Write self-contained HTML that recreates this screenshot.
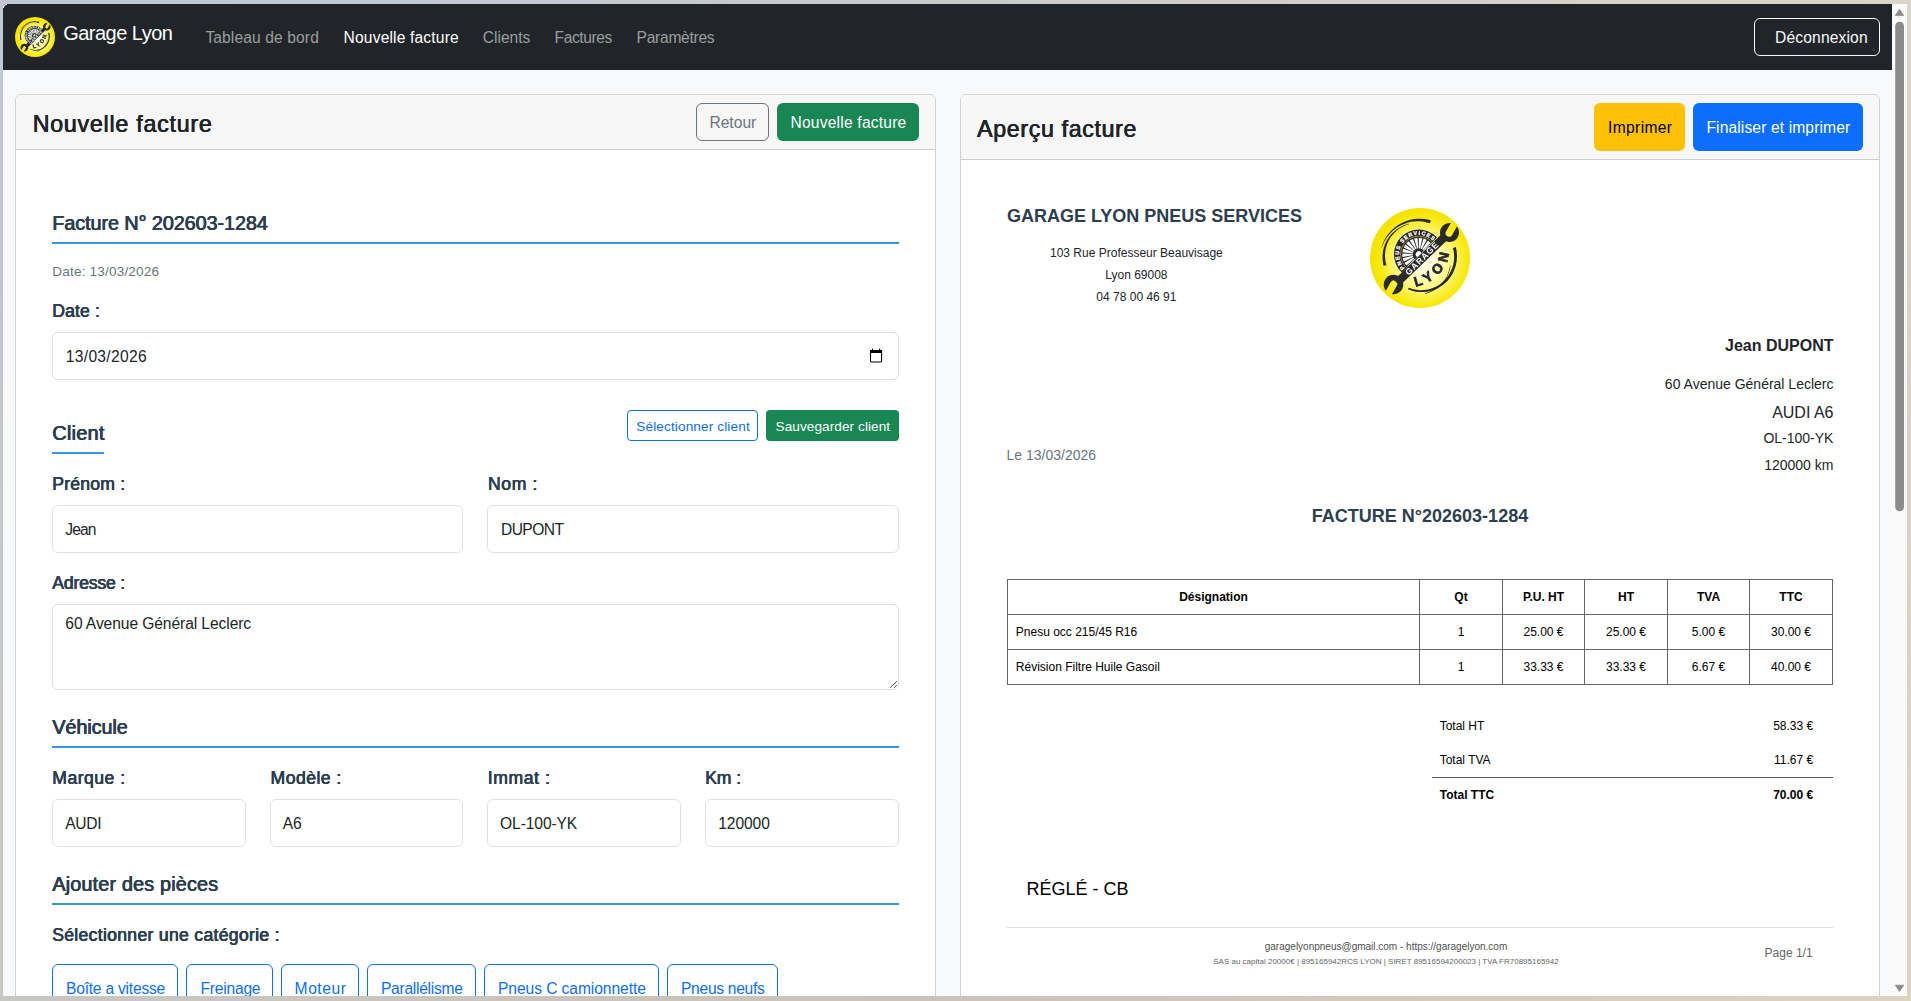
<!DOCTYPE html>
<html lang="fr"><head><meta charset="utf-8"><title>Garage Lyon - Nouvelle facture</title>
<style>
html,body{margin:0;padding:0;}
body{width:1911px;height:1001px;overflow:hidden;position:relative;font-family:"Liberation Sans",Arial,sans-serif;color:#212529;
background:#c9c5bc;}
.frame{position:absolute;left:0;top:0;width:1911px;height:1001px;
background:linear-gradient(90deg,#c0c7d3 0%,#c4c9d0 35%,#cfcec9 65%,#d9d5c9 100%);}
.frame2{position:absolute;left:0;top:0;width:1911px;height:1001px;
background:linear-gradient(90deg,#c7c7c3 0%,#cac3b7 50%,#ddd3c0 100%);
-webkit-mask-image:linear-gradient(180deg,transparent 25%,#000 78%);mask-image:linear-gradient(180deg,transparent 25%,#000 78%);}
.vp{position:absolute;left:3px;top:4px;width:1904px;height:992px;overflow:hidden;background:#f8f9fa;}
.b{position:absolute;box-sizing:border-box;}
.t{position:absolute;white-space:nowrap;line-height:1;margin:0;padding:0;font-weight:400;}
a.t{text-decoration:none;}
.card{border:1px solid #d2d2d2;border-radius:6px;background:#fff;}
.chead{background:#f7f7f7;border-bottom:1px solid #cdcdcd;border-radius:5px 5px 0 0;}
.btn{border-radius:6px;border:1px solid transparent;}
.fc{border:1px solid #dee2e6;border-radius:6px;background:#fff;}
.ul{background:#3498db;}
nav,main,section,header,form,ul,li,table,thead,tbody,tr,th,td,footer,h4,h5,label,button{all:unset;}
</style></head><body>
<div class="frame"></div><div class="frame2"></div>
<div class="vp">
<nav>
<div class="b" style="left:0px;top:0px;width:1889px;height:66px;background:#212529;"></div>
<div class="b" style="left:12px;top:13px;width:40px;height:40px;filter:blur(0.3px);"><svg viewBox="0 0 100 100" width="100%" height="100%" style="display:block"><defs><radialGradient id="lg1" cx="53%" cy="53%" r="50%"><stop offset="0" stop-color="#fffff4"/><stop offset="0.32" stop-color="#fffcc6"/><stop offset="0.62" stop-color="#fdf46c"/><stop offset="0.84" stop-color="#f9eb1c"/><stop offset="1" stop-color="#f4e400"/></radialGradient><clipPath id="lc1"><rect x="-45" y="-45" width="90" height="42.5"/></clipPath><path id="pa1" d="M-17.90 -3.06A19.6 19.6 0 1 1 21.06 -0.33"/><path id="pb1" d="M40.00 78.60A39.6 39.6 0 0 0 79.50 36.24"/></defs><circle cx="50" cy="50" r="50" fill="url(#lg1)"/><path d="M11.55 38.97L12.70 35.68L14.13 32.51L15.83 29.47L17.79 26.60L19.99 23.91L22.41 21.43L25.04 19.17L27.84 17.15L30.81 15.39L33.92 13.89L37.15 12.67L40.46 11.74L43.84 11.10L47.26 10.76L50.69 10.71L54.10 10.97L57.48 11.52L60.79 12.37L59.94 15.35L56.92 14.42L53.81 13.76L50.64 13.36L47.43 13.25L44.21 13.42L40.99 13.87L37.81 14.61L34.70 15.63L31.66 16.92L28.74 18.48L25.95 20.30L23.31 22.37L20.86 24.67L18.60 27.19L16.56 29.91L14.76 32.81L13.21 35.88L11.93 39.08Z" fill="#2a2a2a"/><path d="M13.56 57.74L12.97 54.77L12.62 51.74L12.53 48.69L12.70 45.64L13.14 42.61L13.84 39.63L14.81 36.73L16.03 33.92L17.50 31.24L19.20 28.70L21.12 26.34L23.24 24.16L25.54 22.19L27.99 20.44L30.57 18.91L33.26 17.62L36.04 16.57L38.88 15.76L39.00 16.14L36.25 17.07L33.58 18.22L31.01 19.60L28.56 21.20L26.26 23.01L24.13 25.02L22.19 27.21L20.45 29.56L18.93 32.06L17.65 34.69L16.61 37.41L15.83 40.20L15.30 43.05L15.03 45.91L15.01 48.78L15.24 51.62L15.71 54.41L16.40 57.14Z" fill="#2a2a2a"/><path d="M85.86 39.04L86.72 43.60L87.01 48.20L86.72 52.78L85.87 57.26L84.48 61.58L82.58 65.66L80.20 69.45L77.39 72.89L74.19 75.94L70.66 78.56L66.86 80.70L62.85 82.34L58.69 83.47L54.45 84.06L50.20 84.12L46.00 83.66L41.92 82.69L38.01 81.23L38.62 79.64L42.34 80.97L46.22 81.83L50.19 82.21L54.19 82.09L58.17 81.47L62.06 80.36L65.80 78.77L69.33 76.71L72.59 74.23L75.53 71.34L78.11 68.10L80.27 64.55L81.98 60.74L83.22 56.72L83.94 52.57L84.15 48.34L83.84 44.10L82.99 39.91Z" fill="#2a2a2a"/><path d="M80.52 57.61L80.21 59.69L79.76 61.76L79.17 63.81L78.44 65.84L77.56 67.82L76.55 69.77L75.40 71.65L74.11 73.47L72.70 75.21L71.16 76.87L69.50 78.43L67.72 79.89L65.84 81.24L63.86 82.47L61.78 83.57L59.61 84.54L57.37 85.36L55.07 86.05L54.95 85.25L57.21 84.60L59.41 83.80L61.53 82.86L63.57 81.79L65.52 80.60L67.37 79.29L69.11 77.87L70.75 76.34L72.27 74.73L73.66 73.03L74.93 71.25L76.07 69.41L77.07 67.51L77.94 65.56L78.67 63.57L79.27 61.56L79.72 59.53L80.03 57.49Z" fill="#2a2a2a"/><g transform="translate(50,50) rotate(-45)"><g clip-path="url(#lc1)"><circle cx="1.7" cy="-3.4" r="24.8" fill="#2a2a2a"/><circle cx="1.7" cy="-3.4" r="18.2" fill="none" stroke="#e6dc5a" stroke-width="0.55"/><circle cx="1.7" cy="-3.4" r="11.3" fill="none" stroke="#fff" stroke-width="10.4" stroke-dasharray="2.35 0.88" transform="rotate(2 1.7 -3.4)"/><circle cx="1.7" cy="-3.4" r="3.1" fill="#fff"/></g><path d="M-34 -2.8L34 -1.6L34 6.6L-34 5.4Z" fill="#2a2a2a"/><path d="M48.34 3.89A9.5 9.5 0 1 1 46.52 -2.87L37.22 -0.37A3.5 3.5 0 0 0 39.03 6.39Z" fill="#2a2a2a"/><path d="M-47.25 -1.01A9.8 9.8 0 1 1 -45.44 5.75L-35.82 3.17A3.5 3.5 0 0 0 -37.63 -3.59Z" fill="#2a2a2a"/><text x="1.4" y="4.7" text-anchor="middle" font-family="Liberation Sans,Arial,sans-serif" font-weight="700" font-size="8.6" letter-spacing="1.0" fill="#fff">GARAGE</text><text font-family="Liberation Sans,Arial,sans-serif" font-weight="700" font-size="5.4" letter-spacing="1.05" fill="#fff" stroke="#fff" stroke-width="0.28"><textPath href="#pa1" startOffset="0.6">PNEUS SERVICES</textPath></text></g><text font-family="Liberation Sans,Arial,sans-serif" font-weight="700" font-size="13.6" letter-spacing="4.6" fill="#2a2a2a" stroke="#2a2a2a" stroke-width="0.7"><textPath href="#pb1" startOffset="5.4">LYON</textPath></text></svg></div>
<a class="t" style="font-size:20px;top:19px;letter-spacing:-0.520px;color:#fff;left:60.20px;">Garage Lyon</a>
<a class="t" style="font-size:15.6px;top:26px;letter-spacing:0.112px;color:#9b9d9f;left:202.40px;">Tableau de bord</a>
<a class="t" style="font-size:15.6px;top:26px;letter-spacing:0.159px;color:#fff;left:340.60px;">Nouvelle facture</a>
<a class="t" style="font-size:15.6px;top:26px;letter-spacing:-0.026px;color:#9b9d9f;left:479.80px;">Clients</a>
<a class="t" style="font-size:15.6px;top:26px;letter-spacing:-0.412px;color:#9b9d9f;left:551.60px;">Factures</a>
<a class="t" style="font-size:15.6px;top:26px;letter-spacing:-0.284px;color:#9b9d9f;left:633.60px;">Paramètres</a>
<div class="b btn" style="left:1751px;top:14px;width:126px;height:38px;border-color:#f8f9fa;"></div>
<button class="t" style="font-size:15.6px;top:26px;letter-spacing:0.160px;color:#f8f9fa;left:1772.00px;">Déconnexion</button>
<div class="b" style="left:0;top:0;width:4px;height:4px;background:#c2c9d4"></div><div class="b" style="left:0;top:0;width:4px;height:4px;background:#212529;border-top-left-radius:3px;box-shadow:inset 1px 1px 0 #ececff"></div>
</nav>
<main><section>
<div class="b card" style="left:12px;top:90px;width:921px;height:1006px;"></div>
<div class="b chead" style="left:13px;top:91px;width:919px;height:55px;"></div>
<h4 class="t" style="font-size:23.2px;top:109px;-webkit-text-stroke:0.15px #212529;text-shadow:0.3px 0 0 #212529,-0.3px 0 0 #212529;letter-spacing:0.770px;color:#212529;left:29.70px;">Nouvelle facture</h4>
<div class="b btn" style="left:693px;top:99px;width:73px;height:38px;border-color:#6c757d;"></div>
<button class="t" style="font-size:15.6px;top:111px;letter-spacing:0.020px;color:#6c757d;left:706.40px;">Retour</button>
<div class="b btn" style="left:774px;top:99px;width:142px;height:38px;background:#198754;"></div>
<button class="t" style="font-size:15.6px;top:111px;letter-spacing:0.206px;color:#fff;left:787.50px;">Nouvelle facture</button>
<h5 class="t" style="font-size:19.8px;top:210px;-webkit-text-stroke:0.2px #2c3e50;text-shadow:0.33px 0 0 #2c3e50,-0.33px 0 0 #2c3e50;letter-spacing:-0.061px;color:#2c3e50;left:49.30px;">Facture N° 202603-1284</h5>
<div class="b ul" style="left:49px;top:238px;width:847px;height:2px;"></div>
<small class="t" style="font-size:13.6px;top:261px;letter-spacing:0.168px;color:#6c757d;left:49.30px;">Date: 13/03/2026</small>
<label class="t" style="font-size:17.6px;top:299px;-webkit-text-stroke:0.2px #2c3e50;text-shadow:0.28px 0 0 #2c3e50,-0.28px 0 0 #2c3e50;letter-spacing:0.114px;color:#2c3e50;left:49.30px;">Date :</label>
<div class="b fc" style="left:49px;top:328px;width:847px;height:48px;"></div>
<span class="t" style="font-size:15.6px;top:345px;letter-spacing:0.302px;color:#212529;left:62.80px;">13/03/2026</span>
<svg class="b" style="left:865px;top:343px;width:16px;height:17px" viewBox="0 0 16 17"><rect x="2.5" y="3.5" width="11.1" height="11.4" rx="1.1" fill="none" stroke="#000" stroke-width="1.05"/><rect x="2" y="3" width="12.1" height="2.9" rx="0.6" fill="#000"/><rect x="3.9" y="1.6" width="1.1" height="1.8" fill="#000"/><rect x="11.1" y="1.6" width="1.1" height="1.8" fill="#000"/></svg>
<h5 class="t" style="font-size:19.8px;top:420px;-webkit-text-stroke:0.2px #2c3e50;text-shadow:0.33px 0 0 #2c3e50,-0.33px 0 0 #2c3e50;letter-spacing:0.309px;color:#2c3e50;left:49.30px;">Client</h5>
<div class="b ul" style="left:49px;top:448px;width:52px;height:2px;"></div>
<div class="b btn" style="left:624px;top:406px;width:131px;height:31px;border-color:#0d6efd;border-radius:4px;"></div>
<button class="t" style="font-size:13.6px;top:416px;letter-spacing:0.127px;color:#0d6efd;left:633.30px;">Sélectionner client</button>
<div class="b btn" style="left:763px;top:406px;width:133px;height:31px;background:#198754;border-radius:4px;"></div>
<button class="t" style="font-size:13.6px;top:416px;letter-spacing:0.075px;color:#fff;left:772.50px;">Sauvegarder client</button>
<label class="t" style="font-size:17.6px;top:472px;-webkit-text-stroke:0.2px #2c3e50;text-shadow:0.28px 0 0 #2c3e50,-0.28px 0 0 #2c3e50;letter-spacing:0.199px;color:#2c3e50;left:49.30px;">Prénom :</label>
<div class="b fc" style="left:49px;top:501px;width:411px;height:48px;"></div>
<span class="t" style="font-size:15.6px;top:518px;letter-spacing:-0.917px;color:#212529;left:62.30px;">Jean</span>
<label class="t" style="font-size:17.6px;top:472px;-webkit-text-stroke:0.2px #2c3e50;text-shadow:0.28px 0 0 #2c3e50,-0.28px 0 0 #2c3e50;letter-spacing:0.639px;color:#2c3e50;left:485.00px;">Nom :</label>
<div class="b fc" style="left:484px;top:501px;width:412px;height:48px;"></div>
<span class="t" style="font-size:15.6px;top:518px;letter-spacing:-0.526px;color:#212529;left:497.90px;">DUPONT</span>
<label class="t" style="font-size:17.6px;top:571px;-webkit-text-stroke:0.2px #2c3e50;text-shadow:0.28px 0 0 #2c3e50,-0.28px 0 0 #2c3e50;letter-spacing:-0.175px;color:#2c3e50;left:49.30px;">Adresse :</label>
<div class="b fc" style="left:49px;top:600px;width:847px;height:86px;"></div>
<span class="t" style="font-size:15.6px;top:612px;letter-spacing:-0.083px;color:#212529;left:62.30px;">60 Avenue Général Leclerc</span>
<svg class="b" style="left:883px;top:673px;width:11px;height:11px" viewBox="0 0 11 11"><path d="M4.2 10.8L10.8 4.2M8.2 10.8L10.8 8.2" stroke="#5a5a5a" stroke-width="1" fill="none"/></svg>
<h5 class="t" style="font-size:19.8px;top:714px;-webkit-text-stroke:0.2px #2c3e50;text-shadow:0.33px 0 0 #2c3e50,-0.33px 0 0 #2c3e50;letter-spacing:-0.057px;color:#2c3e50;left:49.30px;">Véhicule</h5>
<div class="b ul" style="left:49px;top:742px;width:847px;height:2px;"></div>
<label class="t" style="font-size:17.6px;top:766px;-webkit-text-stroke:0.2px #2c3e50;text-shadow:0.28px 0 0 #2c3e50,-0.28px 0 0 #2c3e50;letter-spacing:0.475px;color:#2c3e50;left:49.30px;">Marque :</label>
<label class="t" style="font-size:17.6px;top:766px;-webkit-text-stroke:0.2px #2c3e50;text-shadow:0.28px 0 0 #2c3e50,-0.28px 0 0 #2c3e50;letter-spacing:0.452px;color:#2c3e50;left:267.60px;">Modèle :</label>
<label class="t" style="font-size:17.6px;top:766px;-webkit-text-stroke:0.2px #2c3e50;text-shadow:0.28px 0 0 #2c3e50,-0.28px 0 0 #2c3e50;letter-spacing:0.611px;color:#2c3e50;left:484.70px;">Immat :</label>
<label class="t" style="font-size:17.6px;top:766px;-webkit-text-stroke:0.2px #2c3e50;text-shadow:0.28px 0 0 #2c3e50,-0.28px 0 0 #2c3e50;letter-spacing:-0.103px;color:#2c3e50;left:702.20px;">Km :</label>
<div class="b fc" style="left:49px;top:795px;width:194px;height:48px;"></div>
<div class="b fc" style="left:267px;top:795px;width:193px;height:48px;"></div>
<div class="b fc" style="left:484px;top:795px;width:194px;height:48px;"></div>
<div class="b fc" style="left:702px;top:795px;width:194px;height:48px;"></div>
<span class="t" style="font-size:15.6px;top:812px;letter-spacing:-0.261px;color:#212529;left:62.20px;">AUDI</span>
<span class="t" style="font-size:15.6px;top:812px;letter-spacing:-0.110px;color:#212529;left:279.70px;">A6</span>
<span class="t" style="font-size:15.6px;top:812px;letter-spacing:-0.110px;color:#212529;left:497.10px;">OL-100-YK</span>
<span class="t" style="font-size:15.6px;top:812px;letter-spacing:-0.065px;color:#212529;left:715.20px;">120000</span>
<h5 class="t" style="font-size:19.8px;top:871px;-webkit-text-stroke:0.2px #2c3e50;text-shadow:0.33px 0 0 #2c3e50,-0.33px 0 0 #2c3e50;letter-spacing:0.181px;color:#2c3e50;left:49.30px;">Ajouter des pièces</h5>
<div class="b ul" style="left:49px;top:899px;width:847px;height:2px;"></div>
<label class="t" style="font-size:17.6px;top:923px;-webkit-text-stroke:0.2px #2c3e50;text-shadow:0.28px 0 0 #2c3e50,-0.28px 0 0 #2c3e50;letter-spacing:0.306px;color:#2c3e50;left:49.20px;">Sélectionner une catégorie :</label>
<div class="b btn" style="left:49px;top:960px;width:126px;height:42px;border-color:#0d6efd;"></div>
<button class="t" style="font-size:15.6px;top:977px;letter-spacing:-0.217px;color:#0d6efd;left:63.00px;">Boîte a vitesse</button>
<div class="b btn" style="left:183px;top:960px;width:87px;height:42px;border-color:#0d6efd;"></div>
<button class="t" style="font-size:15.6px;top:977px;letter-spacing:-0.220px;color:#0d6efd;left:197.50px;">Freinage</button>
<div class="b btn" style="left:278px;top:960px;width:78px;height:42px;border-color:#0d6efd;"></div>
<button class="t" style="font-size:15.6px;top:977px;letter-spacing:0.557px;color:#0d6efd;left:291.60px;">Moteur</button>
<div class="b btn" style="left:364px;top:960px;width:109px;height:42px;border-color:#0d6efd;"></div>
<button class="t" style="font-size:15.6px;top:977px;letter-spacing:-0.277px;color:#0d6efd;left:378.00px;">Parallélisme</button>
<div class="b btn" style="left:481px;top:960px;width:175px;height:42px;border-color:#0d6efd;"></div>
<button class="t" style="font-size:15.6px;top:977px;letter-spacing:-0.069px;color:#0d6efd;left:495.00px;">Pneus C camionnette</button>
<div class="b btn" style="left:664px;top:960px;width:111px;height:42px;border-color:#0d6efd;"></div>
<button class="t" style="font-size:15.6px;top:977px;letter-spacing:-0.284px;color:#0d6efd;left:678.00px;">Pneus neufs</button>
</section>
<section>
<div class="b card" style="left:957px;top:90px;width:920px;height:1006px;"></div>
<div class="b chead" style="left:958px;top:91px;width:918px;height:65px;"></div>
<h4 class="t" style="font-size:23.2px;top:114px;-webkit-text-stroke:0.15px #212529;text-shadow:0.3px 0 0 #212529,-0.3px 0 0 #212529;letter-spacing:0.658px;color:#212529;left:974.10px;">Aperçu facture</h4>
<div class="b btn" style="left:1591px;top:99px;width:91px;height:48px;background:#ffc107;"></div>
<button class="t" style="font-size:15.6px;top:116px;letter-spacing:0.365px;color:#000;left:1605.00px;">Imprimer</button>
<div class="b btn" style="left:1690px;top:99px;width:170px;height:48px;background:#0d6efd;"></div>
<button class="t" style="font-size:15.6px;top:116px;letter-spacing:0.128px;color:#fff;left:1703.40px;">Finaliser et imprimer</button>
<h5 class="t" style="font-size:18px;top:203px;font-weight:700;color:#2c3e50;left:1003.90px;">GARAGE LYON PNEUS SERVICES</h5>
<span class="t" style="font-size:12px;top:243px;color:#212529;left:1047.00px;">103 Rue Professeur Beauvisage</span>
<span class="t" style="font-size:12px;top:265px;color:#212529;left:1102.26px;">Lyon 69008</span>
<span class="t" style="font-size:12px;top:287px;color:#212529;left:1093.35px;">04 78 00 46 91</span>
<div class="b" style="left:1367px;top:204px;width:100px;height:100px;filter:blur(0.35px);"><svg viewBox="0 0 100 100" width="100%" height="100%" style="display:block"><defs><radialGradient id="lg2" cx="53%" cy="53%" r="50%"><stop offset="0" stop-color="#fffff4"/><stop offset="0.32" stop-color="#fffcc6"/><stop offset="0.62" stop-color="#fdf46c"/><stop offset="0.84" stop-color="#f9eb1c"/><stop offset="1" stop-color="#f4e400"/></radialGradient><clipPath id="lc2"><rect x="-45" y="-45" width="90" height="42.5"/></clipPath><path id="pa2" d="M-17.90 -3.06A19.6 19.6 0 1 1 21.06 -0.33"/><path id="pb2" d="M40.00 78.60A39.6 39.6 0 0 0 79.50 36.24"/></defs><circle cx="50" cy="50" r="50" fill="url(#lg2)"/><path d="M11.55 38.97L12.70 35.68L14.13 32.51L15.83 29.47L17.79 26.60L19.99 23.91L22.41 21.43L25.04 19.17L27.84 17.15L30.81 15.39L33.92 13.89L37.15 12.67L40.46 11.74L43.84 11.10L47.26 10.76L50.69 10.71L54.10 10.97L57.48 11.52L60.79 12.37L59.94 15.35L56.92 14.42L53.81 13.76L50.64 13.36L47.43 13.25L44.21 13.42L40.99 13.87L37.81 14.61L34.70 15.63L31.66 16.92L28.74 18.48L25.95 20.30L23.31 22.37L20.86 24.67L18.60 27.19L16.56 29.91L14.76 32.81L13.21 35.88L11.93 39.08Z" fill="#2a2a2a"/><path d="M13.56 57.74L12.97 54.77L12.62 51.74L12.53 48.69L12.70 45.64L13.14 42.61L13.84 39.63L14.81 36.73L16.03 33.92L17.50 31.24L19.20 28.70L21.12 26.34L23.24 24.16L25.54 22.19L27.99 20.44L30.57 18.91L33.26 17.62L36.04 16.57L38.88 15.76L39.00 16.14L36.25 17.07L33.58 18.22L31.01 19.60L28.56 21.20L26.26 23.01L24.13 25.02L22.19 27.21L20.45 29.56L18.93 32.06L17.65 34.69L16.61 37.41L15.83 40.20L15.30 43.05L15.03 45.91L15.01 48.78L15.24 51.62L15.71 54.41L16.40 57.14Z" fill="#2a2a2a"/><path d="M85.86 39.04L86.72 43.60L87.01 48.20L86.72 52.78L85.87 57.26L84.48 61.58L82.58 65.66L80.20 69.45L77.39 72.89L74.19 75.94L70.66 78.56L66.86 80.70L62.85 82.34L58.69 83.47L54.45 84.06L50.20 84.12L46.00 83.66L41.92 82.69L38.01 81.23L38.62 79.64L42.34 80.97L46.22 81.83L50.19 82.21L54.19 82.09L58.17 81.47L62.06 80.36L65.80 78.77L69.33 76.71L72.59 74.23L75.53 71.34L78.11 68.10L80.27 64.55L81.98 60.74L83.22 56.72L83.94 52.57L84.15 48.34L83.84 44.10L82.99 39.91Z" fill="#2a2a2a"/><path d="M80.52 57.61L80.21 59.69L79.76 61.76L79.17 63.81L78.44 65.84L77.56 67.82L76.55 69.77L75.40 71.65L74.11 73.47L72.70 75.21L71.16 76.87L69.50 78.43L67.72 79.89L65.84 81.24L63.86 82.47L61.78 83.57L59.61 84.54L57.37 85.36L55.07 86.05L54.95 85.25L57.21 84.60L59.41 83.80L61.53 82.86L63.57 81.79L65.52 80.60L67.37 79.29L69.11 77.87L70.75 76.34L72.27 74.73L73.66 73.03L74.93 71.25L76.07 69.41L77.07 67.51L77.94 65.56L78.67 63.57L79.27 61.56L79.72 59.53L80.03 57.49Z" fill="#2a2a2a"/><g transform="translate(50,50) rotate(-45)"><g clip-path="url(#lc2)"><circle cx="1.7" cy="-3.4" r="24.8" fill="#2a2a2a"/><circle cx="1.7" cy="-3.4" r="18.2" fill="none" stroke="#e6dc5a" stroke-width="0.55"/><circle cx="1.7" cy="-3.4" r="11.3" fill="none" stroke="#fff" stroke-width="10.4" stroke-dasharray="2.35 0.88" transform="rotate(2 1.7 -3.4)"/><circle cx="1.7" cy="-3.4" r="3.1" fill="#fff"/></g><path d="M-34 -2.8L34 -1.6L34 6.6L-34 5.4Z" fill="#2a2a2a"/><path d="M48.34 3.89A9.5 9.5 0 1 1 46.52 -2.87L37.22 -0.37A3.5 3.5 0 0 0 39.03 6.39Z" fill="#2a2a2a"/><path d="M-47.25 -1.01A9.8 9.8 0 1 1 -45.44 5.75L-35.82 3.17A3.5 3.5 0 0 0 -37.63 -3.59Z" fill="#2a2a2a"/><text x="1.4" y="4.7" text-anchor="middle" font-family="Liberation Sans,Arial,sans-serif" font-weight="700" font-size="8.6" letter-spacing="1.0" fill="#fff">GARAGE</text><text font-family="Liberation Sans,Arial,sans-serif" font-weight="700" font-size="5.4" letter-spacing="1.05" fill="#fff" stroke="#fff" stroke-width="0.28"><textPath href="#pa2" startOffset="0.6">PNEUS SERVICES</textPath></text></g><text font-family="Liberation Sans,Arial,sans-serif" font-weight="700" font-size="13.6" letter-spacing="4.6" fill="#2a2a2a" stroke="#2a2a2a" stroke-width="0.7"><textPath href="#pb2" startOffset="5.4">LYON</textPath></text></svg></div>
<span class="t" style="font-size:16px;top:334px;font-weight:700;color:#212529;left:1722.02px;">Jean DUPONT</span>
<span class="t" style="font-size:14px;top:373px;color:#212529;left:1661.87px;">60 Avenue Général Leclerc</span>
<span class="t" style="font-size:16px;top:401px;color:#212529;left:1769.14px;">AUDI A6</span>
<span class="t" style="font-size:14px;top:427px;color:#212529;left:1760.43px;">OL-100-YK</span>
<span class="t" style="font-size:14px;top:454px;color:#212529;left:1761.20px;">120000 km</span>
<span class="t" style="font-size:14px;top:444px;color:#6c757d;left:1003.50px;">Le 13/03/2026</span>
<h5 class="t" style="font-size:18px;top:503px;font-weight:700;color:#2c3e50;left:1308.87px;">FACTURE N°202603-1284</h5>
<div class="b" style="left:1004px;top:575px;width:826px;height:106px;border:1px solid #666;background:#fff;"></div>
<div class="b" style="left:1004px;top:610px;width:826px;height:1px;background:#666;"></div>
<div class="b" style="left:1004px;top:645px;width:826px;height:1px;background:#666;"></div>
<div class="b" style="left:1416px;top:575px;width:1px;height:106px;background:#666;"></div>
<div class="b" style="left:1499px;top:575px;width:1px;height:106px;background:#666;"></div>
<div class="b" style="left:1581px;top:575px;width:1px;height:106px;background:#666;"></div>
<div class="b" style="left:1664px;top:575px;width:1px;height:106px;background:#666;"></div>
<div class="b" style="left:1746px;top:575px;width:1px;height:106px;background:#666;"></div>
<table>
<thead><tr>
<th class="t" style="font-size:12px;top:587px;font-weight:700;color:#000;left:1176.15px;">Désignation</th>
<th class="t" style="font-size:12px;top:587px;font-weight:700;color:#000;left:1451.34px;">Qt</th>
<th class="t" style="font-size:12px;top:587px;font-weight:700;color:#000;left:1519.95px;">P.U. HT</th>
<th class="t" style="font-size:12px;top:587px;font-weight:700;color:#000;left:1614.99px;">HT</th>
<th class="t" style="font-size:12px;top:587px;font-weight:700;color:#000;left:1693.95px;">TVA</th>
<th class="t" style="font-size:12px;top:587px;font-weight:700;color:#000;left:1776.33px;">TTC</th>
</tr></thead><tbody>
<tr>
<td class="t" style="font-size:12px;top:622px;color:#000;left:1012.80px;">Pnesu occ 215/45 R16</td>
<td class="t" style="font-size:12px;top:622px;color:#000;left:1454.67px;">1</td>
<td class="t" style="font-size:12px;top:622px;color:#000;left:1520.49px;">25.00 €</td>
<td class="t" style="font-size:12px;top:622px;color:#000;left:1602.99px;">25.00 €</td>
<td class="t" style="font-size:12px;top:622px;color:#000;left:1688.82px;">5.00 €</td>
<td class="t" style="font-size:12px;top:622px;color:#000;left:1767.99px;">30.00 €</td>
</tr>
<tr>
<td class="t" style="font-size:12px;top:657px;color:#000;left:1012.80px;">Révision Filtre Huile Gasoil</td>
<td class="t" style="font-size:12px;top:657px;color:#000;left:1454.67px;">1</td>
<td class="t" style="font-size:12px;top:657px;color:#000;left:1520.49px;">33.33 €</td>
<td class="t" style="font-size:12px;top:657px;color:#000;left:1602.99px;">33.33 €</td>
<td class="t" style="font-size:12px;top:657px;color:#000;left:1688.82px;">6.67 €</td>
<td class="t" style="font-size:12px;top:657px;color:#000;left:1767.99px;">40.00 €</td>
</tr>
</tbody></table>
<table><tbody>
<tr>
<td class="t" style="font-size:12px;top:716px;color:#000;left:1436.70px;">Total HT</td>
<td class="t" style="font-size:12px;top:716px;color:#000;left:1770.18px;">58.33 €</td>
</tr>
<tr>
<td class="t" style="font-size:12px;top:750px;color:#000;left:1436.70px;">Total TVA</td>
<td class="t" style="font-size:12px;top:750px;color:#000;left:1771.08px;">11.67 €</td>
</tr>
<tr>
<td class="t" style="font-size:12px;top:785px;font-weight:700;color:#000;left:1436.70px;">Total TTC</td>
<td class="t" style="font-size:12px;top:785px;font-weight:700;color:#000;left:1770.18px;">70.00 €</td>
</tr>
</tbody></table>
<div class="b" style="left:1429px;top:773px;width:401px;height:1px;background:#555;"></div>
<span class="t" style="font-size:18px;top:876px;color:#000;left:1023.50px;">RÉGLÉ - CB</span>
<div class="b" style="left:1004px;top:923px;width:826px;height:1px;background:#ddd;"></div>
<footer>
<span class="t" style="font-size:10px;top:938px;color:#505050;left:1261.75px;">garagelyonpneus@gmail.com - https://garagelyon.com</span>
<span class="t" style="font-size:8px;top:954px;color:#666;left:1210.28px;">SAS au capital 20000€ | 895165942RCS LYON | SIRET 89516594200023 | TVA FR70895165942</span>
<span class="t" style="font-size:12px;top:943px;color:#666;left:1761.54px;">Page 1/1</span>
</footer>
</section></main>
<div class="b" style="left:1889px;top:0px;width:15px;height:992px;background:#fafafa;"></div>
<svg class="b" style="left:1889px;top:0px;width:15px;height:992px" viewBox="0 0 15 992"><path d="M7.5 5.2L11.7 11.6H3.3Z" fill="#8b8b8b" stroke="#8b8b8b" stroke-width="0.8" stroke-linejoin="round"/><rect x="3.2" y="17.8" width="8.8" height="489.4" rx="4.4" fill="#8b8b8b"/><path d="M7.5 987.4L11.7 981.2H3.3Z" fill="#8b8b8b" stroke="#8b8b8b" stroke-width="0.8" stroke-linejoin="round"/></svg>
</div></body></html>
